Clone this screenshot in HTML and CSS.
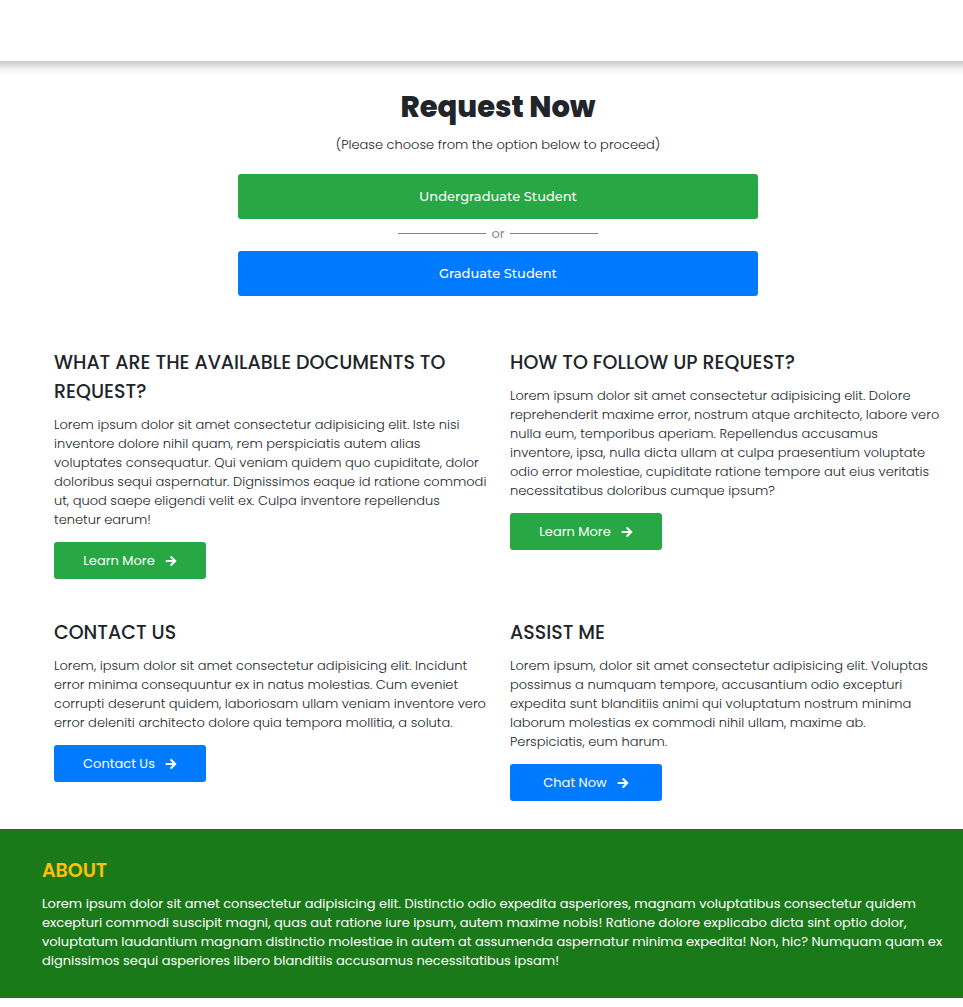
FILE: index.html
```html
<!DOCTYPE html>
<html lang="en">
<head>
<meta charset="utf-8">
<meta name="viewport" content="width=device-width, initial-scale=1">
<title>Request Now</title>
<link rel="stylesheet" href="styles.css">
</head>
<body>
<svg class="sprite" aria-hidden="true">
  <symbol id="arrow" viewBox="0 0 12 12"><path d="M1.500 6H10M6.200 2L10.200 6L6.200 10" fill="none" stroke="currentColor" stroke-width="2" stroke-linecap="round" stroke-linejoin="miter"/></symbol>
</svg>
<header class="topbar"></header>
<main class="content">
  <section class="request">
    <h1 class="request-title">Request Now</h1>
    <p class="request-note">(Please choose from the option below to proceed)</p>
    <button class="choice green" type="button">Undergraduate Student</button>
    <div class="divider">or</div>
    <button class="choice blue" type="button">Graduate Student</button>
  </section>
  <section class="topics">
    <article>
      <h2 class="heading">WHAT ARE THE AVAILABLE DOCUMENTS TO REQUEST?</h2>
      <p class="copy">Lorem ipsum dolor sit amet consectetur adipisicing elit. Iste nisi inventore dolore nihil quam, rem perspiciatis autem alias voluptates consequatur. Qui veniam quidem quo cupiditate, dolor doloribus sequi aspernatur. Dignissimos eaque id ratione commodi ut, quod saepe eligendi velit ex. Culpa inventore repellendus tenetur earum!</p>
      <button class="action green" type="button">Learn More <svg class="arrow" aria-hidden="true"><use href="#arrow"/></svg></button>
    </article>
    <article>
      <h2 class="heading">HOW TO FOLLOW UP REQUEST?</h2>
      <p class="copy">Lorem ipsum dolor sit amet consectetur adipisicing elit. Dolore reprehenderit maxime error, nostrum atque architecto, labore vero nulla eum, temporibus aperiam. Repellendus accusamus inventore, ipsa, nulla dicta ullam at culpa praesentium voluptate odio error molestiae, cupiditate ratione tempore aut eius veritatis necessitatibus doloribus cumque ipsum?</p>
      <button class="action green" type="button">Learn More <svg class="arrow" aria-hidden="true"><use href="#arrow"/></svg></button>
    </article>
    <article>
      <h2 class="heading">CONTACT US</h2>
      <p class="copy">Lorem, ipsum dolor sit amet consectetur adipisicing elit. Incidunt error minima consequuntur ex in natus molestias. Cum eveniet corrupti deserunt quidem, laboriosam ullam veniam inventore vero error deleniti architecto dolore quia tempora mollitia, a soluta.</p>
      <button class="action blue" type="button">Contact Us <svg class="arrow" aria-hidden="true"><use href="#arrow"/></svg></button>
    </article>
    <article>
      <h2 class="heading">ASSIST ME</h2>
      <p class="copy">Lorem ipsum, dolor sit amet consectetur adipisicing elit. Voluptas possimus a numquam tempore, accusantium odio excepturi expedita sunt blanditiis animi qui voluptatum nostrum minima laborum molestias ex commodi nihil ullam, maxime ab.<br>Perspiciatis, eum harum.</p>
      <button class="action blue" type="button">Chat Now <svg class="arrow" aria-hidden="true"><use href="#arrow"/></svg></button>
    </article>
  </section>
</main>
<footer class="about">
  <h2 class="heading about-title">ABOUT</h2>
  <p class="copy about-copy">Lorem ipsum dolor sit amet consectetur adipisicing elit. Distinctio odio expedita asperiores, magnam voluptatibus consectetur quidem excepturi commodi suscipit magni, quas aut ratione iure ipsum, autem maxime nobis! Ratione dolore explicabo dicta sint optio dolor, voluptatum laudantium magnam distinctio molestiae in autem at assumenda aspernatur minima expedita! Non, hic? Numquam quam ex dignissimos sequi asperiores libero blanditiis accusamus necessitatibus ipsam!</p>
</footer>
</body>
</html>
```
FILE: styles.css
```css
* { box-sizing: border-box; }
body {
  margin: 0;
  background: #fff;
  color: #212529;
  font: 300 13px/19px Poppins, Inter, sans-serif;
}
h1, h2, p { margin: 0; }
button { border: 0; border-radius: 3px; color: #fff; font: inherit; cursor: pointer; }
.sprite { display: none; }
.green { background: #28a745; }
.blue { background: #007bff; }

.topbar { height: 61px; }
.content {
  padding: 24px 0 28px;
  background: linear-gradient(#c8c8c8, #e2e2e2 5px, #f5f5f5 9px, #fff 15px);
}

.request {
  display: flex;
  flex-direction: column;
  align-items: center;
  margin-bottom: 52px;
  padding: 0 21px 0 54px;
}
.request-title { font-size: 29px; line-height: 45px; font-weight: 800; }
.request-note { margin: 5px 0 20px; }
.choice {
  width: 100%;
  max-width: 520px;
  padding: 13px;
  font-family: Montserrat, Inter, sans-serif;
  font-weight: 500;
}
.divider {
  display: flex;
  align-items: center;
  gap: 5px;
  width: 200px;
  height: 32px;
  padding-bottom: 3px;
  color: #868a8e;
  font-weight: 400;
}
.divider::before, .divider::after { content: ""; flex: 1; height: 1px; background: #808488; }

.topics {
  display: grid;
  grid-template-columns: repeat(auto-fit, minmax(400px, 1fr));
  gap: 39px 23px;
  padding: 0 20px 0 54px;
}
.heading { margin-bottom: 9px; font-size: 19px; line-height: 29px; font-weight: 500; }
.copy { margin-bottom: 13px; }
.action {
  display: inline-flex;
  align-items: center;
  justify-content: center;
  gap: 10px;
  width: 152px;
  padding: 9px;
  font-weight: 400;
}
.arrow { width: 12px; height: 12px; }

.about { padding: 27px 16px 28px 42px; background: #1a7a1a; color: #fff; }
.about-title { color: #ffc107; font-weight: 600; }
.about-copy { margin: 0; font-weight: 400; }
```
